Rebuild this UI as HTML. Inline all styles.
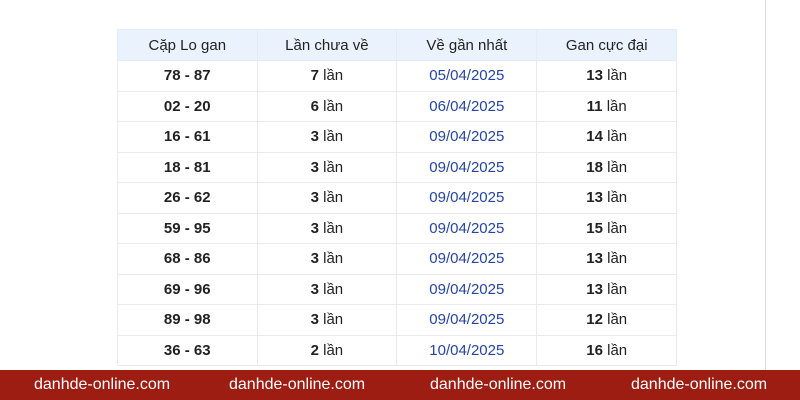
<!DOCTYPE html>
<html><head><style>
body{margin:0;width:800px;height:400px;background:#fff;position:relative;overflow:hidden;font-family:"Liberation Sans",Arial,sans-serif}
.vl{position:absolute;left:765px;top:0;width:1px;height:370px;background:#ddd}
table{position:absolute;left:117px;top:29px;border-collapse:collapse;width:560px}
td,th{width:140px;border:1px solid #eaeaea;text-align:center;font-size:15px;height:29.5px;padding:0;color:#222}
th{background:#eaf3fd;font-weight:normal;height:30px;border-color:#e3ecf5}
td.d{color:#2445a8}
.bar{position:absolute;left:0;top:370px;width:800px;height:30px;background:#9e1d12;color:#fff;font-size:16px}
.bar span{position:absolute;top:6px}
</style></head><body>
<div class="vl"></div>
<table>
<tr><th>Cặp Lo gan</th><th>Lần chưa về</th><th>Về gần nhất</th><th>Gan cực đại</th></tr>
<tr><td><b>78 - 87</b></td><td><b>7</b> lần</td><td class="d">05/04/2025</td><td><b>13</b> lần</td></tr>
<tr><td><b>02 - 20</b></td><td><b>6</b> lần</td><td class="d">06/04/2025</td><td><b>11</b> lần</td></tr>
<tr><td><b>16 - 61</b></td><td><b>3</b> lần</td><td class="d">09/04/2025</td><td><b>14</b> lần</td></tr>
<tr><td><b>18 - 81</b></td><td><b>3</b> lần</td><td class="d">09/04/2025</td><td><b>18</b> lần</td></tr>
<tr><td><b>26 - 62</b></td><td><b>3</b> lần</td><td class="d">09/04/2025</td><td><b>13</b> lần</td></tr>
<tr><td><b>59 - 95</b></td><td><b>3</b> lần</td><td class="d">09/04/2025</td><td><b>15</b> lần</td></tr>
<tr><td><b>68 - 86</b></td><td><b>3</b> lần</td><td class="d">09/04/2025</td><td><b>13</b> lần</td></tr>
<tr><td><b>69 - 96</b></td><td><b>3</b> lần</td><td class="d">09/04/2025</td><td><b>13</b> lần</td></tr>
<tr><td><b>89 - 98</b></td><td><b>3</b> lần</td><td class="d">09/04/2025</td><td><b>12</b> lần</td></tr>
<tr><td><b>36 - 63</b></td><td><b>2</b> lần</td><td class="d">10/04/2025</td><td><b>16</b> lần</td></tr>
</table>
<div class="bar"><span style="left:34px">danhde-online.com</span><span style="left:229px">danhde-online.com</span><span style="left:430px">danhde-online.com</span><span style="left:631px">danhde-online.com</span></div>
</body></html>
